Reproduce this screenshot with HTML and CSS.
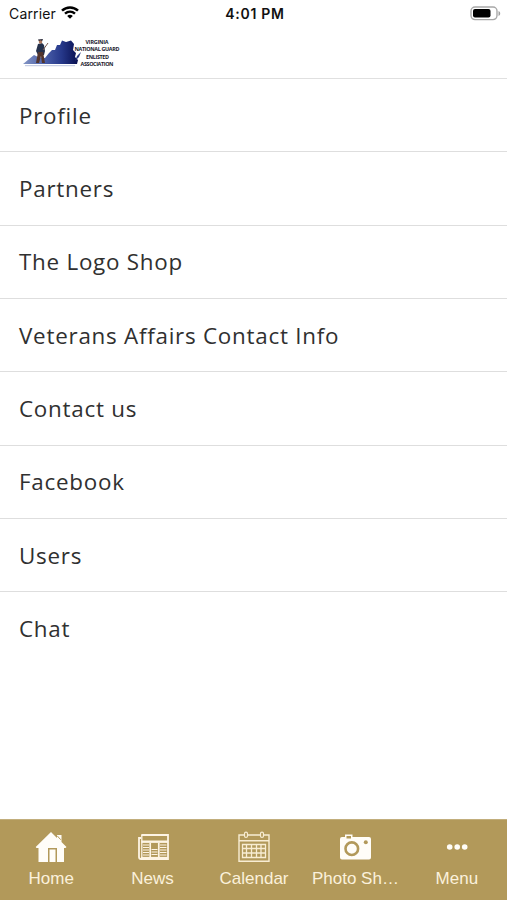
FILE: index.html
```
<!DOCTYPE html>
<html lang="en">

<head>
    <meta charset="UTF-8">
    <meta name="viewport" content="width=device-width, initial-scale=1.0">
    <title>Menu</title>
    <link rel="stylesheet" href="styles.css">
</head>

<body>

    <div class="status-bar">
        <div class="carrier">
            <span>Carrier</span>
            <svg class="wifi" width="18" height="13" viewBox="0 0 18 13" fill="none" stroke="#000">
                <path d="M1 4.7 C5.5 .3 12.5 .3 17 4.7" stroke-width="2.5" />
                <path d="M4 7.7 C7 5 11 5 14 7.7" stroke-width="2.4" />
                <path d="M9 12.7 L6.2 9.9 C7.8 8.5 10.2 8.5 11.8 9.9 Z" fill="#000" stroke="none" />
            </svg>
        </div>
        <div class="time">4:01 PM</div>
        <div class="battery">
            <svg width="31" height="15" viewBox="0 0 31 15">
                <rect x="1" y="1" width="26" height="12.6" rx="4" fill="none" stroke="#a8a8a8" stroke-width="1.4" />
                <rect x="3" y="3" width="17.5" height="8.6" rx="2" fill="#000" />
                <path d="M28.5 5 C30.8 6 30.8 9 28.5 10 Z" fill="#a0a0a0" />
            </svg>
        </div>
    </div>

    <header class="header">
        <svg class="logo" width="100" height="34" viewBox="0 0 100 34">
            <defs>
                <linearGradient id="state" x1="0" x2="1" y1="0" y2="0">
                    <stop offset="0" stop-color="#8495c4" />
                    <stop offset=".38" stop-color="#4c61aa" />
                    <stop offset=".7" stop-color="#26388a" />
                    <stop offset="1" stop-color="#080f50" />
                </linearGradient>
            </defs>
            <path d="M2 28 L13 19 L17 21 L24 22 L28 17 L31 14 L34 14 L36 9 L39 9 L41 4.5 L45 6 L50 4.5 L53 8 L52 14 L55 17 L54 21 L57 24 L56 28 Z" fill="url(#state)" />
            <path d="M54 25 L56 20 L60 16 L58 21 Z" fill="#26367f" />
            <path d="M17 8 L21 7 L23 9 L24 15 L23 19 L17 19 L15 15 Z" fill="#25314c" />
            <path d="M17 16 L22 16 L24 27 L21 27 L20 20 L18 27 L15 27 Z" fill="#52352e" />
            <path d="M17 3.5 L22 3 L21 5.5 L18 5.5 Z" fill="#262635" />
            <circle cx="19.5" cy="6" r="1.7" fill="#ad785d" />
            <path d="M22 14 L27 7" stroke="#78584c" stroke-width="1" />
            <path d="M4 29.7 H54" stroke="#b4bddc" stroke-width=".9" />
            <g class="logo-text">
                <text x="76" y="7.9" textLength="23">VIRGINIA</text>
                <text x="76" y="15.2" textLength="45">NATIONAL GUARD</text>
                <text x="76.5" y="22.5" textLength="23">ENLISTED</text>
                <text x="76" y="29.8" textLength="33">ASSOCIATION</text>
            </g>
        </svg>
    </header>

    <main class="menu-list">
        <a class="menu-item">Profile</a>
        <a class="menu-item">Partners</a>
        <a class="menu-item">The Logo Shop</a>
        <a class="menu-item">Veterans Affairs Contact Info</a>
        <a class="menu-item">Contact us</a>
        <a class="menu-item">Facebook</a>
        <a class="menu-item">Users</a>
        <a class="menu-item">Chat</a>
    </main>

    <nav class="tab-bar">
        <a class="tab">
            <svg width="32" height="32" viewBox="0 0 32 32">
                <path d="M16 1 L22 7 V4 H26.5 V11 L31.5 16 L30.5 17 H29 V31 H22 V17 H13 V31 H3.5 V17 H1.5 L.7 16 Z" fill="#fffdf8" />
                <path d="M14.5 31 V18.5 H20.5 V31 Z" fill="#fffdf8" />
                <path d="M22.2 4.8 L25.7 8.7" stroke="#b2995a" stroke-width="1" />
            </svg>
            <span>Home</span>
        </a>
        <a class="tab">
            <svg width="32" height="32" viewBox="0 0 32 32" fill="none" stroke="#fdf4e4">
                <path d="M4.3 4 H31 V28 H4 Q2 28 2 26 V7 H4" stroke-width="1.8" />
                <path d="M4.8 4 V27" stroke-width="1.3" />
                <path d="M4.3 10.7 H31" stroke-width="2.4" />
                <path d="M13.2 12 V27 M21.8 12 V27" stroke-width="1.7" />
                <path d="M6 14 H12 M6 16.5 H12 M6 19 H12 M6 21.5 H12 M6 24 H12 M14.5 18.5 H20.5 M14.5 21 H20.5 M14.5 23.5 H20.5 M23 14 H29.5 M23 16.5 H29.5 M23 19 H29.5 M23 21.5 H29.5 M23 24 H29.5" stroke-width="1.1" />
                <path d="M4 26.8 H31" stroke-width="1.8" />
            </svg>
            <span>News</span>
        </a>
        <a class="tab">
            <svg width="32" height="32" viewBox="0 0 32 32" fill="none" stroke="#f8edd3">
                <path d="M6 4 H1 V30.3 H31 V4 H26 M10 4 H22 M1 9.8 H31" stroke-width="1.4" />
                <rect x="6.5" y="1.2" width="3" height="5.2" rx="1.5" stroke-width="1.2" />
                <rect x="22.5" y="1.2" width="3" height="5.2" rx="1.5" stroke-width="1.2" />
                <path d="M8.5 13.5 H27.5 V26.5 H4.5 V17.5 H27.5 M4.5 22 H27.5 M8.5 13.5 V26.5 M13.5 13.5 V26.5 M18.5 13.5 V26.5 M23 13.5 V26.5 M8.5 13.5 H4.5 V17.5" stroke-width="1.3" />
            </svg>
            <span>Calendar</span>
        </a>
        <a class="tab">
            <svg width="32" height="32" viewBox="0 0 32 32">
                <path d="M3 6 H6 V3.5 H13.5 V6 H30 Q32 6 32 8 V26.5 Q32 28.5 30 28.5 H3 Q1 28.5 1 26.5 V8 Q1 6 3 6 Z" fill="#fffdf8" />
                <rect x="7.5" y="5" width="4.5" height="2.5" fill="#b2995a" />
                <circle cx="12.8" cy="17.7" r="6.3" fill="none" stroke="#b2995a" stroke-width="2.6" />
                <circle cx="26.8" cy="11.2" r="2" fill="#b2995a" />
            </svg>
            <span>Photo Sh…</span>
        </a>
        <a class="tab">
            <svg width="32" height="32" viewBox="0 0 32 32" fill="#fffdf8">
                <circle cx="8.7" cy="16" r="2.8" />
                <circle cx="16.2" cy="16" r="2.8" />
                <circle cx="23.7" cy="16" r="2.8" />
            </svg>
            <span>Menu</span>
        </a>
    </nav>

</body>

</html>
```
FILE: styles.css
```
* {
    box-sizing: border-box;
}

body {
    margin: 0;
    height: 900px;
    display: flex;
    flex-direction: column;
    background-color: #fff;
    font-family: "Open Sans", sans-serif;
    overflow: hidden;
}

.status-bar {
    display: grid;
    grid-template-columns: 1fr auto 1fr;
    align-items: center;
    height: 27px;
    padding: 0 6px 0 9px;
    font-family: Inter, sans-serif;
    font-size: 14px;
    color: #111;
}

.carrier {
    display: flex;
    align-items: center;
    gap: 5px;
    letter-spacing: 0.15px;
}

.wifi {
    margin-top: -2px;
}

.time {
    font-weight: 600;
    letter-spacing: 0.7px;
}

.battery {
    display: flex;
    justify-content: flex-end;
}

.header {
    height: 52px;
    padding: 9px 0 0 21px;
    border-bottom: 1px solid #e0e0e0;
}

.logo {
    display: block;
    overflow: visible;
}

.logo-text {
    font-family: "Open Sans", sans-serif;
    font-size: 5.4px;
    font-weight: 700;
    text-anchor: middle;
    fill: #17172b;
}

.menu-list {
    flex: 1;
}

.menu-item {
    display: flex;
    align-items: center;
    height: 73.33px;
    padding-left: 19px;
    border-bottom: 1px solid #dedede;
    font-size: 22.4px;
    letter-spacing: 0.75px;
    color: #303030;
}

.menu-item:last-child {
    border-bottom-color: transparent;
}

.tab-bar {
    display: flex;
    height: 81px;
    background-color: #b2995a;
    border-top: 1px solid #c2ae7c;
}

.tab {
    flex: 1;
    display: flex;
    flex-direction: column;
    align-items: center;
    padding: 11px 0 0 1px;
    font-family: "Liberation Sans", Arial, sans-serif;
    font-size: 17px;
    line-height: 20px;
    color: #fbf1dc;
}

.tab span {
    margin-top: 6px;
}
```
